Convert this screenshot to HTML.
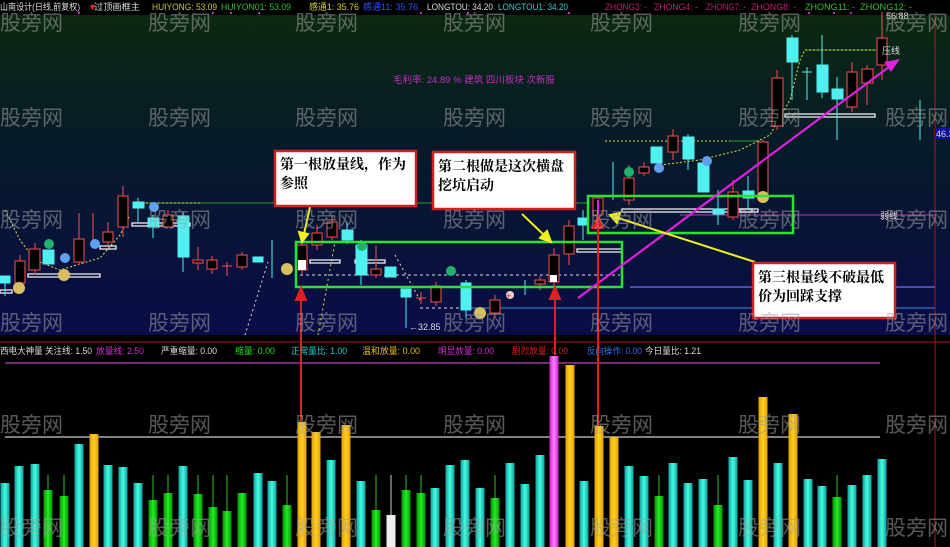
<!DOCTYPE html>
<html><head><meta charset="utf-8"><style>
html,body{margin:0;padding:0;background:#000;}
svg{display:block;font-family:"Liberation Sans","Noto Sans CJK SC",sans-serif;}
</style></head><body>
<svg width="950" height="547" viewBox="0 0 950 547" xmlns="http://www.w3.org/2000/svg">
<defs>
<linearGradient id="bg" x1="0" y1="0" x2="0" y2="1">
<stop offset="0" stop-color="#0b2a0e"/><stop offset="0.45" stop-color="#071a2a"/><stop offset="1" stop-color="#0a0c48"/>
</linearGradient>
<linearGradient id="cy" x1="0" y1="0" x2="1" y2="0"><stop offset="0" stop-color="#10a0a0"/><stop offset="0.5" stop-color="#40ffe0"/><stop offset="1" stop-color="#10a0a0"/></linearGradient>
<linearGradient id="gr" x1="0" y1="0" x2="1" y2="0"><stop offset="0" stop-color="#089008"/><stop offset="0.5" stop-color="#20f020"/><stop offset="1" stop-color="#089008"/></linearGradient>
<linearGradient id="or" x1="0" y1="0" x2="1" y2="0"><stop offset="0" stop-color="#e0a000"/><stop offset="0.5" stop-color="#ffd020"/><stop offset="1" stop-color="#e0a000"/></linearGradient>
<linearGradient id="mg" x1="0" y1="0" x2="1" y2="0"><stop offset="0" stop-color="#d020d0"/><stop offset="0.5" stop-color="#ff80ff"/><stop offset="1" stop-color="#d020d0"/></linearGradient>
</defs>
<rect x="0" y="0" width="950" height="335" fill="url(#bg)"/>
<rect x="0" y="0" width="950" height="15" fill="#000"/>
<rect x="0" y="335" width="950" height="212" fill="#000"/>

<g font-size="9">
<text x="0" y="10" fill="#ddd" textLength="80" lengthAdjust="spacingAndGlyphs">山南设计(日线,前复权)</text>
<text x="88" y="10" fill="#f22">▼</text><text x="94" y="10" fill="#ddd" textLength="46" lengthAdjust="spacingAndGlyphs">过顶画框主</text>
<text x="152" y="10" fill="#c8c832" textLength="65" lengthAdjust="spacingAndGlyphs">HUIYONG: 53.09</text>
<text x="221" y="10" fill="#30c030" textLength="70" lengthAdjust="spacingAndGlyphs">HUIYON01: 53.09</text>
<text x="309" y="10" fill="#d8d020" textLength="50" lengthAdjust="spacingAndGlyphs">感通1: 35.76</text>
<text x="363" y="10" fill="#3050ff" textLength="55" lengthAdjust="spacingAndGlyphs">感通11: 35.76</text>
<text x="427" y="10" fill="#ddd" textLength="66" lengthAdjust="spacingAndGlyphs">LONGTOU: 34.20</text>
<text x="498" y="10" fill="#30d0d0" textLength="70" lengthAdjust="spacingAndGlyphs">LONGTOU1: 34.20</text>
<text x="605" y="10" fill="#c02070" textLength="42" lengthAdjust="spacingAndGlyphs">ZHONG3: -</text>
<text x="654" y="10" fill="#c02070" textLength="44" lengthAdjust="spacingAndGlyphs">ZHONG4: -</text>
<text x="706" y="10" fill="#c02070" textLength="40" lengthAdjust="spacingAndGlyphs">ZHONG7: -</text>
<text x="751" y="10" fill="#c02070" textLength="45" lengthAdjust="spacingAndGlyphs">ZHONG8: -</text>
<text x="805" y="10" fill="#30c030" textLength="50" lengthAdjust="spacingAndGlyphs">ZHONG11: -</text>
<text x="860" y="10" fill="#30c030" textLength="52" lengthAdjust="spacingAndGlyphs">ZHONG12: -</text>
</g>
<g fill="#c030c0">
<rect x="78" y="12" width="2" height="2"/><rect x="212" y="12" width="2" height="2"/><rect x="230" y="12" width="2" height="2"/><rect x="258" y="12" width="2" height="2"/><rect x="420" y="12" width="2" height="2"/><rect x="467" y="12" width="2" height="2"/><rect x="568" y="12" width="2" height="2"/><rect x="808" y="12" width="2" height="2"/><rect x="833" y="12" width="2" height="2"/><rect x="850" y="12" width="2" height="2"/>
</g>
<line x1="935" y1="15" x2="935" y2="547" stroke="#b01818" stroke-width="1"/>
<text x="393" y="83" font-size="9.5" fill="#c030c0">毛利率: 24.89 %   建筑   四川板块   次新股</text>

<line x1="138" y1="203" x2="590" y2="203" stroke="#30a030" stroke-width="1"/>
<line x1="138" y1="203" x2="200" y2="203" stroke="#e0e040" stroke-dasharray="2,2"/>
<line x1="680" y1="215" x2="935" y2="215" stroke="#c030c0" stroke-width="1"/>
<line x1="630" y1="287" x2="935" y2="287" stroke="#6060d0" stroke-width="1.5"/>
<line x1="470" y1="308" x2="935" y2="308" stroke="#4090d0" stroke-width="1"/>
<line x1="730" y1="141" x2="760" y2="141" stroke="#30a030"/>
<line x1="605" y1="141" x2="730" y2="141" stroke="#e0e040" stroke-dasharray="2,2"/>
<line x1="805" y1="50" x2="880" y2="50" stroke="#30a030"/>
<line x1="805" y1="50" x2="880" y2="50" stroke="#e0e040" stroke-dasharray="2,2"/>
<polyline points="5,210 20,240 35,260 60,270 100,258 120,235 130,215" fill="none" stroke="#e0e040" stroke-dasharray="2,2"/>
<polyline points="660,165 700,160 740,150 770,135 790,100 800,60 805,50" fill="none" stroke="#e0e040" stroke-dasharray="2,2"/>
<line x1="300" y1="275" x2="620" y2="275" stroke="#ddd" stroke-dasharray="3,3"/>
<line x1="420" y1="308" x2="470" y2="308" stroke="#ddd" stroke-dasharray="3,3"/>
<line x1="245" y1="335" x2="268" y2="262" stroke="#ddd" stroke-dasharray="2,3"/>
<line x1="318" y1="335" x2="335" y2="242" stroke="#e0e040" stroke-dasharray="2,3"/>
<line x1="395" y1="255" x2="420" y2="300" stroke="#ddd" stroke-dasharray="2,3"/>
<g fill="none" stroke="#eee" stroke-width="1.3">
<rect x="28" y="274" width="72" height="3"/><rect x="0" y="290" width="12" height="3"/><rect x="100" y="246" width="16" height="3"/>
<rect x="132" y="223" width="58" height="3"/><rect x="310" y="260" width="30" height="3"/><rect x="355" y="260" width="30" height="3"/>
<rect x="577" y="249" width="45" height="3"/><rect x="622" y="209" width="130" height="3"/><rect x="740" y="209" width="18" height="3"/>
<rect x="785" y="114" width="90" height="3"/>
</g>

<g stroke="#d04848" stroke-width="1.2" fill="#000">
<line x1="20" y1="255" x2="20" y2="290"/><rect x="15" y="261" width="10" height="22"/>
<line x1="35" y1="243" x2="35" y2="275"/><rect x="29" y="249" width="11" height="21"/>
<line x1="79" y1="213" x2="79" y2="265"/><rect x="74" y="239" width="10" height="23"/>
<line x1="93" y1="213" x2="93" y2="245"/>
<line x1="108" y1="222" x2="108" y2="245"/><rect x="103" y="232" width="10" height="10"/>
<line x1="123" y1="186" x2="123" y2="237"/><rect x="118" y="196" width="10" height="31"/>
<line x1="168" y1="210" x2="168" y2="228"/><rect x="163" y="215" width="10" height="12"/>
<line x1="198" y1="247" x2="198" y2="270"/><rect x="193" y="260" width="10" height="3"/>
<line x1="212" y1="256" x2="212" y2="274"/><rect x="207" y="260" width="10" height="9"/>
<line x1="222" y1="266" x2="232" y2="266"/><line x1="227" y1="262" x2="227" y2="276"/>
<line x1="242" y1="252" x2="242" y2="270"/><rect x="237" y="255" width="10" height="12"/>
<line x1="317" y1="225" x2="317" y2="250"/><rect x="312" y="233" width="10" height="12"/>
<line x1="332" y1="215" x2="332" y2="240"/><rect x="327" y="222" width="10" height="15"/>
<line x1="376" y1="245" x2="376" y2="278"/><rect x="371" y="269" width="10" height="6"/>
<line x1="416" y1="298" x2="426" y2="298"/><line x1="421" y1="292" x2="421" y2="304"/>
<line x1="436" y1="282" x2="436" y2="306"/><rect x="431" y="286" width="10" height="16"/>
<line x1="495" y1="295" x2="495" y2="318"/><rect x="490" y="300" width="10" height="13"/>
<line x1="540" y1="276" x2="540" y2="290"/><rect x="535" y="280" width="10" height="4"/>
<line x1="554" y1="248" x2="554" y2="286"/><rect x="549" y="255" width="10" height="27"/>
<line x1="569" y1="220" x2="569" y2="265"/><rect x="564" y="226" width="10" height="28"/>
<line x1="598" y1="195" x2="598" y2="220"/><rect x="593" y="198" width="10" height="17"/>
<line x1="629" y1="165" x2="629" y2="205"/><rect x="624" y="178" width="10" height="22"/>
<line x1="644" y1="162" x2="644" y2="176"/><rect x="639" y="167" width="10" height="6"/>
<line x1="673" y1="129" x2="673" y2="160"/><rect x="668" y="136" width="10" height="16"/>
<line x1="733" y1="180" x2="733" y2="220"/><rect x="728" y="192" width="10" height="25"/>
<line x1="763" y1="140" x2="763" y2="200"/><rect x="758" y="142" width="10" height="51"/>
<line x1="777" y1="70" x2="777" y2="130"/><rect x="772" y="78" width="11" height="48"/>
<line x1="852" y1="62" x2="852" y2="112"/><rect x="847" y="72" width="10" height="35"/>
<line x1="867" y1="65" x2="867" y2="105"/><rect x="862" y="69" width="11" height="14"/>
<line x1="882" y1="12" x2="882" y2="80"/><rect x="877" y="38" width="10" height="27"/>
<line x1="302" y1="240" x2="302" y2="275"/><rect x="297" y="245" width="10" height="25"/>
</g>
<rect x="298" y="260" width="8" height="10" fill="#fff"/>
<rect x="550" y="275" width="7" height="7" fill="#fff"/>
<g fill="#50f0f0" stroke="#50f0f0" stroke-width="1">
<rect x="0" y="276" width="10" height="7"/><line x1="5" y1="283" x2="5" y2="296"/>
<rect x="43" y="250" width="11" height="14"/>
<rect x="133" y="202" width="11" height="6"/><line x1="138" y1="198" x2="138" y2="222"/>
<rect x="148" y="218" width="11" height="9"/><line x1="153" y1="215" x2="153" y2="238"/>
<rect x="178" y="216" width="11" height="41"/><line x1="183" y1="212" x2="183" y2="272"/>
<rect x="253" y="257" width="10" height="5"/>
<line x1="272" y1="240" x2="272" y2="278"/>
<rect x="342" y="230" width="11" height="10"/><line x1="347" y1="222" x2="347" y2="244"/>
<rect x="356" y="245" width="11" height="30"/><line x1="361" y1="240" x2="361" y2="285"/>
<rect x="385" y="267" width="11" height="10"/>
<rect x="401" y="289" width="10" height="8"/><line x1="406" y1="297" x2="406" y2="328"/>
<rect x="461" y="283" width="10" height="27"/><line x1="466" y1="280" x2="466" y2="318"/>
<line x1="525" y1="280" x2="525" y2="295"/>
<rect x="578" y="218" width="10" height="7"/><line x1="583" y1="210" x2="583" y2="240"/>
<line x1="613" y1="162" x2="613" y2="200"/>
<rect x="651" y="147" width="11" height="16"/>
<rect x="683" y="137" width="11" height="22"/><line x1="688" y1="134" x2="688" y2="170"/>
<rect x="698" y="163" width="11" height="29"/>
<line x1="718" y1="190" x2="718" y2="225"/><rect x="713" y="209" width="11" height="5"/>
<rect x="743" y="191" width="11" height="7"/><line x1="748" y1="176" x2="748" y2="210"/>
<rect x="787" y="38" width="11" height="24"/><line x1="792" y1="35" x2="792" y2="100"/>
<line x1="802" y1="72" x2="812" y2="72"/><line x1="807" y1="67" x2="807" y2="100"/>
<rect x="817" y="65" width="11" height="27"/><line x1="822" y1="35" x2="822" y2="98"/>
<rect x="832" y="89" width="11" height="10"/><line x1="837" y1="77" x2="837" y2="140"/>
<line x1="920" y1="100" x2="920" y2="140"/>
</g>
<g>
<circle cx="64" cy="275" r="6" fill="#d8c060"/><circle cx="19" cy="288" r="6" fill="#d8c060"/><circle cx="287" cy="269" r="6" fill="#d8c060"/><circle cx="480" cy="313" r="6" fill="#d8c060"/><circle cx="763" cy="197" r="6" fill="#d8c060"/>
<circle cx="49" cy="244" r="5" fill="#20b070"/><circle cx="362" cy="246" r="5" fill="#20b070"/><circle cx="451" cy="271" r="5" fill="#20b070"/><circle cx="629" cy="172" r="5" fill="#20b070"/>
<circle cx="95" cy="244" r="5" fill="#60a0f0"/><circle cx="65" cy="258" r="5" fill="#60a0f0"/><circle cx="154" cy="207" r="5" fill="#60a0f0"/><circle cx="707" cy="161" r="5" fill="#60a0f0"/><circle cx="659" cy="168" r="5" fill="#60a0f0"/>
<circle cx="510" cy="295" r="4" fill="#f0d0d0"/><text x="506" y="299" font-size="9" fill="#e02020">+</text>
</g>

<rect x="296" y="242" width="326" height="45" fill="none" stroke="#30e030" stroke-width="2.5"/>
<rect x="588" y="196" width="205" height="37" fill="none" stroke="#30e030" stroke-width="2.5"/>

<line x1="578" y1="298" x2="893" y2="64" stroke="#e020e0" stroke-width="2.2"/>
<polygon points="900,59 884,62 891,72" fill="#e020e0"/>
<line x1="598" y1="200" x2="598" y2="218" stroke="#e020e0" stroke-width="2"/>

<g stroke="#f0f020" stroke-width="2" fill="#f0f020">
<line x1="310" y1="207" x2="304" y2="234"/><polygon points="302,242 299,232 308,234"/>
<line x1="522" y1="214" x2="545" y2="236"/><polygon points="551,242 540,238 547,231"/>
<line x1="755" y1="262" x2="618" y2="218"/><polygon points="610,215 620,213 617,223"/>
</g>

<g stroke="#e02020" stroke-width="2" fill="#e02020">
<line x1="301" y1="420" x2="301" y2="298"/><polygon points="301,288 296,300 306,300"/>
<line x1="555" y1="355" x2="555" y2="298"/><polygon points="555,287 550,299 560,299"/>
<line x1="598" y1="430" x2="598" y2="226"/><polygon points="598,216 593,228 603,228"/>
</g>

<g font-family="'Liberation Serif','Noto Serif CJK SC',serif" font-size="14" font-weight="bold" fill="#000">
<rect x="275" y="151" width="141" height="55" fill="#fff" stroke="#d02020" stroke-width="2.5"/>
<text x="280" y="169">第一根放量线，作为</text><text x="280" y="188">参照</text>
<rect x="433" y="152" width="142" height="57" fill="#fff" stroke="#d02020" stroke-width="2.5"/>
<text x="438" y="171">第二根做是这次横盘</text><text x="438" y="190">挖坑启动</text>
<rect x="753" y="263" width="142" height="55" fill="#fff" stroke="#d02020" stroke-width="2.5"/>
<text x="758" y="282">第三根量线不破最低</text><text x="758" y="301">价为回踩支撑</text>
</g>
<g font-size="9" fill="#ddd">
<text x="882" y="54">压线</text><text x="880" y="219">弱线</text>
<text x="886" y="19">56.88</text><text x="409" y="330">←32.85</text>
</g>
<rect x="935" y="128" width="15" height="11" fill="#1010a0"/><text x="936" y="137" font-size="9" fill="#ddd">46.3</text>

<line x1="0" y1="342" x2="950" y2="342" stroke="#b01818"/>
<g font-size="9">
<text x="0" y="354" fill="#ddd" textLength="92" lengthAdjust="spacingAndGlyphs">西电大神量 关注线: 1.50</text>
<text x="96" y="354" fill="#d030d0" textLength="48" lengthAdjust="spacingAndGlyphs">放量线: 2.50</text>
<text x="161" y="354" fill="#ddd" textLength="56" lengthAdjust="spacingAndGlyphs">严重缩量: 0.00</text>
<text x="235" y="354" fill="#20e020" textLength="40" lengthAdjust="spacingAndGlyphs">缩量: 0.00</text>
<text x="291" y="354" fill="#20d0d0" textLength="56" lengthAdjust="spacingAndGlyphs">正常量比: 1.00</text>
<text x="362" y="354" fill="#e0c020" textLength="58" lengthAdjust="spacingAndGlyphs">温和放量: 0.00</text>
<text x="438" y="354" fill="#d030d0" textLength="56" lengthAdjust="spacingAndGlyphs">明显放量: 0.00</text>
<text x="512" y="354" fill="#e02020" textLength="56" lengthAdjust="spacingAndGlyphs">剧烈放量: 0.00</text>
<text x="587" y="354" fill="#3070f0" textLength="55" lengthAdjust="spacingAndGlyphs">反向操作: 0.00</text>
<text x="645" y="354" fill="#ddd" textLength="56" lengthAdjust="spacingAndGlyphs">今日量比: 1.21</text>
</g>
<line x1="5" y1="363" x2="880" y2="363" stroke="#a030a0" stroke-width="1.5"/>
<line x1="5" y1="437" x2="880" y2="437" stroke="#ccc" stroke-width="1.2"/>
<g stroke="#30c030" stroke-width="1">
<line x1="48" y1="475" x2="48" y2="490"/><line x1="64" y1="475" x2="64" y2="496"/><line x1="153" y1="475" x2="153" y2="500"/><line x1="168" y1="475" x2="168" y2="493"/><line x1="198" y1="475" x2="198" y2="494"/><line x1="213" y1="475" x2="213" y2="507"/><line x1="227" y1="475" x2="227" y2="511"/><line x1="287" y1="475" x2="287" y2="505"/><line x1="376" y1="475" x2="376" y2="510"/><line x1="391" y1="475" x2="391" y2="515" stroke="#ccc"/><line x1="406" y1="475" x2="406" y2="490"/><line x1="421" y1="475" x2="421" y2="493"/><line x1="495" y1="475" x2="495" y2="498"/><line x1="659" y1="475" x2="659" y2="496"/><line x1="718" y1="475" x2="718" y2="505"/><line x1="837" y1="475" x2="837" y2="497"/>
</g>
<g>
<rect x="0.5" y="483" width="9" height="64" fill="url(#cy)"/>
<rect x="14.5" y="466" width="9" height="81" fill="url(#cy)"/>
<rect x="30.5" y="464" width="9" height="83" fill="url(#cy)"/>
<rect x="43.5" y="490" width="9" height="57" fill="url(#gr)"/>
<rect x="59.5" y="496" width="9" height="51" fill="url(#gr)"/>
<rect x="74.5" y="444" width="9" height="103" fill="url(#cy)"/>
<rect x="89.5" y="434" width="9" height="113" fill="url(#or)"/>
<rect x="103.5" y="465" width="9" height="82" fill="url(#cy)"/>
<rect x="118.5" y="467" width="9" height="80" fill="url(#cy)"/>
<rect x="133.5" y="483" width="9" height="64" fill="url(#cy)"/>
<rect x="148.5" y="500" width="9" height="47" fill="url(#gr)"/>
<rect x="163.5" y="493" width="9" height="54" fill="url(#gr)"/>
<rect x="178.5" y="466" width="9" height="81" fill="url(#cy)"/>
<rect x="193.5" y="494" width="9" height="53" fill="url(#gr)"/>
<rect x="208.5" y="507" width="9" height="40" fill="url(#gr)"/>
<rect x="222.5" y="511" width="9" height="36" fill="url(#gr)"/>
<rect x="237.5" y="493" width="9" height="54" fill="url(#gr)"/>
<rect x="253.5" y="473" width="9" height="74" fill="url(#cy)"/>
<rect x="267.5" y="481" width="9" height="66" fill="url(#cy)"/>
<rect x="282.5" y="505" width="9" height="42" fill="url(#gr)"/>
<rect x="297.5" y="422" width="9" height="125" fill="url(#or)"/>
<rect x="311.5" y="432" width="9" height="115" fill="url(#or)"/>
<rect x="326.5" y="460" width="9" height="87" fill="url(#cy)"/>
<rect x="341.5" y="425" width="9" height="122" fill="url(#or)"/>
<rect x="356.5" y="481" width="9" height="66" fill="url(#cy)"/>
<rect x="371.5" y="510" width="9" height="37" fill="url(#gr)"/>
<rect x="386.5" y="515" width="9" height="32" fill="#eee"/>
<rect x="401.5" y="490" width="9" height="57" fill="url(#gr)"/>
<rect x="416.5" y="493" width="9" height="54" fill="url(#gr)"/>
<rect x="430.5" y="488" width="9" height="59" fill="url(#cy)"/>
<rect x="445.5" y="465" width="9" height="82" fill="url(#cy)"/>
<rect x="460.5" y="460" width="9" height="87" fill="url(#cy)"/>
<rect x="475.5" y="488" width="9" height="59" fill="url(#cy)"/>
<rect x="490.5" y="498" width="9" height="49" fill="url(#gr)"/>
<rect x="505.5" y="463" width="9" height="84" fill="url(#cy)"/>
<rect x="520.5" y="484" width="9" height="63" fill="url(#cy)"/>
<rect x="535.5" y="455" width="9" height="92" fill="url(#cy)"/>
<rect x="549.5" y="356" width="9" height="191" fill="url(#mg)"/>
<rect x="565.5" y="365" width="9" height="182" fill="url(#or)"/>
<rect x="579.5" y="481" width="9" height="66" fill="url(#cy)"/>
<rect x="594.5" y="426" width="9" height="121" fill="url(#or)"/>
<rect x="609.5" y="437" width="9" height="110" fill="url(#or)"/>
<rect x="624.5" y="466" width="9" height="81" fill="url(#cy)"/>
<rect x="639.5" y="476" width="9" height="71" fill="url(#cy)"/>
<rect x="654.5" y="496" width="9" height="51" fill="url(#gr)"/>
<rect x="668.5" y="463" width="9" height="84" fill="url(#cy)"/>
<rect x="683.5" y="483" width="9" height="64" fill="url(#cy)"/>
<rect x="698.5" y="479" width="9" height="68" fill="url(#cy)"/>
<rect x="713.5" y="505" width="9" height="42" fill="url(#gr)"/>
<rect x="728.5" y="457" width="9" height="90" fill="url(#cy)"/>
<rect x="743.5" y="480" width="9" height="67" fill="url(#cy)"/>
<rect x="758.5" y="397" width="9" height="150" fill="url(#or)"/>
<rect x="773.5" y="463" width="9" height="84" fill="url(#cy)"/>
<rect x="788.5" y="414" width="9" height="133" fill="url(#or)"/>
<rect x="803.5" y="479" width="9" height="68" fill="url(#cy)"/>
<rect x="817.5" y="486" width="9" height="61" fill="url(#cy)"/>
<rect x="832.5" y="497" width="9" height="50" fill="url(#gr)"/>
<rect x="847.5" y="485" width="9" height="62" fill="url(#cy)"/>
<rect x="862.5" y="475" width="9" height="72" fill="url(#cy)"/>
<rect x="877.5" y="459" width="9" height="88" fill="url(#cy)"/>
</g>
<line x1="301" y1="342" x2="301" y2="420" stroke="#e02020" stroke-width="1.2"/>
<line x1="598" y1="342" x2="598" y2="426" stroke="#e02020" stroke-width="1.2"/>

<g font-family="'Noto Sans CJK SC',sans-serif" font-size="21" fill="#a0a0a0" fill-opacity="0.55">
<text x="0" y="30">股旁网</text><text x="148" y="30">股旁网</text><text x="295" y="30">股旁网</text><text x="443" y="30">股旁网</text><text x="590" y="30">股旁网</text><text x="738" y="30">股旁网</text><text x="885" y="30">股旁网</text>
<text x="0" y="125">股旁网</text><text x="148" y="125">股旁网</text><text x="295" y="125">股旁网</text><text x="443" y="125">股旁网</text><text x="590" y="125">股旁网</text><text x="738" y="125">股旁网</text><text x="885" y="125">股旁网</text>
<text x="0" y="227">股旁网</text><text x="148" y="227">股旁网</text><text x="295" y="227">股旁网</text><text x="443" y="227">股旁网</text><text x="590" y="227">股旁网</text><text x="738" y="227">股旁网</text><text x="885" y="227">股旁网</text>
<text x="0" y="330">股旁网</text><text x="148" y="330">股旁网</text><text x="295" y="330">股旁网</text><text x="443" y="330">股旁网</text><text x="590" y="330">股旁网</text><text x="738" y="330">股旁网</text><text x="885" y="330">股旁网</text>
<text x="0" y="432">股旁网</text><text x="148" y="432">股旁网</text><text x="295" y="432">股旁网</text><text x="443" y="432">股旁网</text><text x="590" y="432">股旁网</text><text x="738" y="432">股旁网</text><text x="885" y="432">股旁网</text>
<text x="0" y="535">股旁网</text><text x="148" y="535">股旁网</text><text x="295" y="535">股旁网</text><text x="443" y="535">股旁网</text><text x="590" y="535">股旁网</text><text x="738" y="535">股旁网</text><text x="885" y="535">股旁网</text>
</g>
</svg>
</body></html>
